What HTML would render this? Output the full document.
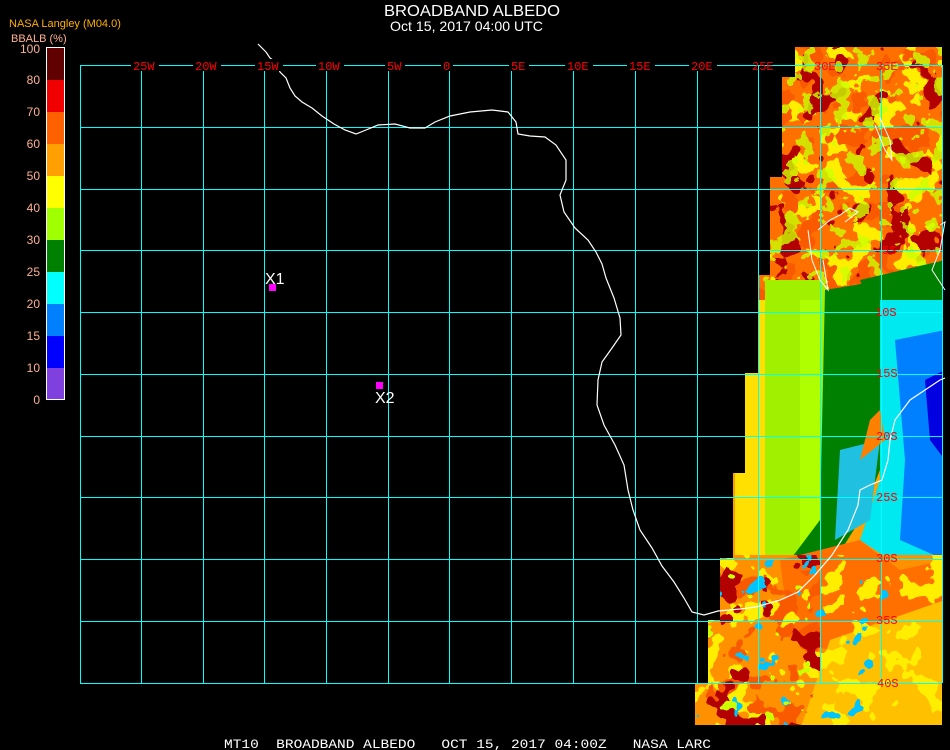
<!DOCTYPE html>
<html><head><meta charset="utf-8"><style>
html,body{margin:0;padding:0;background:#000;width:950px;height:750px;overflow:hidden}
svg{display:block}
.m{font-family:"Liberation Mono",monospace}
.s{font-family:"Liberation Sans",sans-serif}
</style></head><body>
<svg width="950" height="750" viewBox="0 0 950 750" xmlns="http://www.w3.org/2000/svg">
<defs>
<clipPath id="dc"><polygon points="795,47 942,47 942,725 695,725 695,683 708,683 708,620 720,620 720,558 733,558 733,473 745,473 745,373 758,373 758,275 770,275 770,177 782,177 782,77 795,77"/></clipPath>
<filter id="nDark" x="0" y="0" width="100%" height="100%"><feTurbulence type="fractalNoise" baseFrequency="0.035" numOctaves="3" seed="3"/><feColorMatrix type="matrix" values="0 0 0 0 0.45  0 0 0 0 0  0 0 0 0 0  1.6 0 0 0 -0.35"/><feComponentTransfer><feFuncA type="discrete" tableValues="0 0 0 0 1 1"/></feComponentTransfer></filter>
<filter id="nRed" x="0" y="0" width="100%" height="100%"><feTurbulence type="fractalNoise" baseFrequency="0.04" numOctaves="3" seed="9"/><feColorMatrix type="matrix" values="0 0 0 0 0.95  0 0 0 0 0.1  0 0 0 0 0  1.6 0 0 0 -0.35"/><feComponentTransfer><feFuncA type="discrete" tableValues="0 0 0 1 1"/></feComponentTransfer></filter>
<filter id="nYel" x="0" y="0" width="100%" height="100%"><feTurbulence type="fractalNoise" baseFrequency="0.04" numOctaves="3" seed="7"/><feColorMatrix type="matrix" values="0 0 0 0 1  0 0 0 0 0.85  0 0 0 0 0  1.6 0 0 0 -0.35"/><feComponentTransfer><feFuncA type="discrete" tableValues="0 0 0 1 1"/></feComponentTransfer></filter>
<filter id="nGrn" x="0" y="0" width="100%" height="100%"><feTurbulence type="fractalNoise" baseFrequency="0.05" numOctaves="3" seed="11"/><feColorMatrix type="matrix" values="0 0 0 0 0.6  0 0 0 0 1  0 0 0 0 0  1.6 0 0 0 -0.4"/><feComponentTransfer><feFuncA type="discrete" tableValues="0 0 0 0 1"/></feComponentTransfer></filter>
<filter id="nGrn2" x="0" y="0" width="100%" height="100%"><feTurbulence type="fractalNoise" baseFrequency="0.06" numOctaves="3" seed="21"/><feColorMatrix type="matrix" values="0 0 0 0 0.6  0 0 0 0 1  0 0 0 0 0  1.6 0 0 0 -0.35"/><feComponentTransfer><feFuncA type="discrete" tableValues="0 0 0 1 1"/></feComponentTransfer></filter>
<filter id="nBlu" x="0" y="0" width="100%" height="100%"><feTurbulence type="fractalNoise" baseFrequency="0.04" numOctaves="3" seed="5"/><feColorMatrix type="matrix" values="0 0 0 0 0  0 0 0 0 0.55  0 0 0 0 1  1.6 0 0 0 -0.35"/><feComponentTransfer><feFuncA type="discrete" tableValues="0 0 0 0 1"/></feComponentTransfer></filter>
</defs>

<g clip-path="url(#dc)">
  <rect x="690" y="40" width="260" height="700" fill="#ffa000"/>
  <rect x="690" y="40" width="260" height="270" fill="#ff7000"/>
  <rect x="690" y="40" width="260" height="270" filter="url(#nYel)"/>
  <rect x="690" y="40" width="260" height="270" filter="url(#nRed)"/>
  <rect x="690" y="40" width="260" height="270" filter="url(#nDark)"/>
  <rect x="690" y="40" width="260" height="270" filter="url(#nGrn2)" opacity="0.8"/>
  <rect x="690" y="300" width="70" height="260" fill="#ffa000"/>
  <rect x="735" y="300" width="30" height="260" fill="#ffe000"/>
  <rect x="765" y="280" width="60" height="300" fill="#a0f000"/>
  <rect x="800" y="300" width="20" height="250" fill="#b0ff00"/>
  <polygon points="825,290 885,280 880,470 860,520 835,560 800,580 790,560 820,520" fill="#008000"/>
  <polygon points="860,280 945,260 945,300 900,310 880,330" fill="#008000"/>
  <polygon points="880,300 945,300 945,560 890,560 860,540 880,480" fill="#00e8f0"/>
  <polygon points="895,340 945,330 945,560 900,540 905,460" fill="#0080ff"/>
  <polygon points="925,380 945,370 945,460 930,440" fill="#0000e0"/>
  <polygon points="840,450 880,440 870,520 835,540" fill="#20c0e0"/>
  <polygon points="870,420 880,410 885,440 860,460" fill="#ff8000"/>
  <rect x="690" y="555" width="260" height="175" fill="#ff9000"/>
  <polygon points="780,560 860,540 900,570 945,560 945,620 880,620 830,650 790,640" fill="#ff7000"/>
  <polygon points="830,640 945,600 945,730 800,730" fill="#ffc000"/>
  <rect x="690" y="555" width="260" height="175" filter="url(#nYel)"/>
  <rect x="690" y="555" width="130" height="175" filter="url(#nRed)"/>
  <rect x="690" y="555" width="130" height="175" filter="url(#nDark)"/>
  <rect x="690" y="555" width="200" height="175" filter="url(#nBlu)"/>
  <rect x="690" y="555" width="120" height="175" filter="url(#nGrn)"/>
</g>

<g stroke="#00ffff" stroke-width="1" fill="none" shape-rendering="crispEdges">
  <line x1="80" y1="65.5" x2="942" y2="65.5"/><line x1="80" y1="127.5" x2="942" y2="127.5"/><line x1="80" y1="189.5" x2="942" y2="189.5"/><line x1="80" y1="250.5" x2="942" y2="250.5"/><line x1="80" y1="312.5" x2="942" y2="312.5"/><line x1="80" y1="374.5" x2="942" y2="374.5"/><line x1="80" y1="436.5" x2="942" y2="436.5"/><line x1="80" y1="497.5" x2="942" y2="497.5"/><line x1="80" y1="559.5" x2="942" y2="559.5"/><line x1="80" y1="621.5" x2="942" y2="621.5"/><line x1="80" y1="683.5" x2="942" y2="683.5"/>
  <line x1="80.5" y1="65" x2="80.5" y2="683"/><line x1="141.5" y1="65" x2="141.5" y2="683"/><line x1="203.5" y1="65" x2="203.5" y2="683"/><line x1="264.5" y1="65" x2="264.5" y2="683"/><line x1="326.5" y1="65" x2="326.5" y2="683"/><line x1="388.5" y1="65" x2="388.5" y2="683"/><line x1="449.5" y1="65" x2="449.5" y2="683"/><line x1="511.5" y1="65" x2="511.5" y2="683"/><line x1="573.5" y1="65" x2="573.5" y2="683"/><line x1="635.5" y1="65" x2="635.5" y2="683"/><line x1="697.5" y1="65" x2="697.5" y2="683"/><line x1="758.5" y1="65" x2="758.5" y2="683"/><line x1="820.5" y1="65" x2="820.5" y2="683"/><line x1="881.5" y1="65" x2="881.5" y2="683"/><line x1="942.5" y1="65" x2="942.5" y2="683"/>
</g>

<polyline fill="none" stroke="#fff" stroke-width="1.2" points="258,44 262,48 266,52 270,58 276,62 280,72 286,78 290,88 295,96 302,102 312,108 322,116 334,124 345,130 356,134 366,130 378,125 395,124 410,128 425,128 435,122 450,116 470,112 492,110 508,112 516,122 518,134 530,136 545,137 556,145 566,160 566,180 560,195 564,212 575,228 588,240 596,252 602,264 606,278 614,298 620,318 621,335 612,348 602,362 598,380 597,405 604,425 615,445 624,465 628,490 633,510 640,530 652,548 662,566 674,582 684,598 692,612 704,615 718,611 740,609 756,607 780,600 798,592 815,575 832,555 848,530 858,505 860,490 870,485 882,480 888,460 890,440 895,420 910,400 925,390 940,380 945,378"/>
<polyline fill="none" stroke="#fff" stroke-width="1" points="818,230 830,220 840,215 850,208 858,212 845,222"/>
<polyline fill="none" stroke="#fff" stroke-width="1" points="875,125 885,150 892,160 890,140 880,118"/>
<polyline fill="none" stroke="#fff" stroke-width="1" points="808,230 812,260 820,280 828,290 823,260"/>
<polyline fill="none" stroke="#fff" stroke-width="1" points="940,225 945,222 940,250 932,270 945,290"/>

<g font-size="12" fill="#ff0000" class="m">
  <rect x="131" y="59" width="28" height="12" fill="#000"/><text x="133" y="70">25W</text>
  <rect x="193" y="59" width="28" height="12" fill="#000"/><text x="195" y="70">20W</text>
  <rect x="255" y="59" width="28" height="12" fill="#000"/><text x="257" y="70">15W</text>
  <rect x="316" y="59" width="28" height="12" fill="#000"/><text x="318" y="70">10W</text>
  <rect x="385" y="59" width="20" height="12" fill="#000"/><text x="387" y="70">5W</text>
  <rect x="441" y="59" width="12" height="12" fill="#000"/><text x="443" y="70">0</text>
  <rect x="509" y="59" width="20" height="12" fill="#000"/><text x="511" y="70">5E</text>
  <rect x="565" y="59" width="28" height="12" fill="#000"/><text x="567" y="70">10E</text>
  <rect x="627" y="59" width="28" height="12" fill="#000"/><text x="629" y="70">15E</text>
  <rect x="689" y="59" width="28" height="12" fill="#000"/><text x="691" y="70">20E</text>
  <text x="752" y="70">25E</text>
  <text x="814" y="70">30E</text>
  <text x="876" y="70">35E</text>
  <text x="882" y="254">5S</text>
  <text x="875" y="316">10S</text>
  <text x="876" y="377">15S</text>
  <text x="876" y="440">20S</text>
  <text x="876" y="501">25S</text>
  <text x="876" y="562">30S</text>
  <text x="876" y="624">35S</text>
  <text x="877" y="687">40S</text>
</g>

<rect x="269" y="284" width="7" height="7" fill="#ff00ff"/>
<text x="265" y="284" font-size="16" fill="#fff" class="s">X1</text>
<rect x="376" y="382" width="7" height="7" fill="#ff00ff"/>
<text x="375" y="403" font-size="16" fill="#fff" class="s">X2</text>

<text x="384" y="16" font-size="16" fill="#fff" class="s" textLength="176" lengthAdjust="spacingAndGlyphs">BROADBAND ALBEDO</text>
<text x="390" y="31" font-size="14" fill="#fff" class="s" textLength="153" lengthAdjust="spacingAndGlyphs">Oct 15, 2017 04:00 UTC</text>
<text x="9" y="27" font-size="11" fill="#ffb000" class="s">NASA Langley (M04.0)</text>
<text x="11" y="42" font-size="11" fill="#ffb090" class="s">BBALB (%)</text>

<rect x="46" y="48" width="18" height="32" fill="#600000"/>
<rect x="46" y="80" width="18" height="32" fill="#f00000"/>
<rect x="46" y="112" width="18" height="32" fill="#ff6000"/>
<rect x="46" y="144" width="18" height="32" fill="#ffa000"/>
<rect x="46" y="176" width="18" height="32" fill="#ffff00"/>
<rect x="46" y="208" width="18" height="32" fill="#a0ff00"/>
<rect x="46" y="240" width="18" height="32" fill="#008000"/>
<rect x="46" y="272" width="18" height="32" fill="#00ffff"/>
<rect x="46" y="304" width="18" height="32" fill="#0080ff"/>
<rect x="46" y="336" width="18" height="32" fill="#0000ff"/>
<rect x="46" y="368" width="18" height="32" fill="#8040e0"/>
<rect x="46.5" y="47.5" width="18" height="352" fill="none" stroke="#fff" stroke-width="1"/>
<g font-size="12" fill="#ffb090" text-anchor="end" class="s">
  <text x="40" y="53">100</text><text x="40" y="84">80</text><text x="40" y="116">70</text><text x="40" y="148">60</text><text x="40" y="180">50</text><text x="40" y="212">40</text><text x="40" y="244">30</text><text x="40" y="276">25</text><text x="40" y="308">20</text><text x="40" y="340">15</text><text x="40" y="372">10</text><text x="40" y="404">0</text>
</g>

<text x="224" y="748" font-size="13" fill="#fff" class="m" xml:space="preserve" textLength="487" lengthAdjust="spacingAndGlyphs">MT10  BROADBAND ALBEDO   OCT 15, 2017 04:00Z   NASA LARC</text>
</svg>
</body></html>
